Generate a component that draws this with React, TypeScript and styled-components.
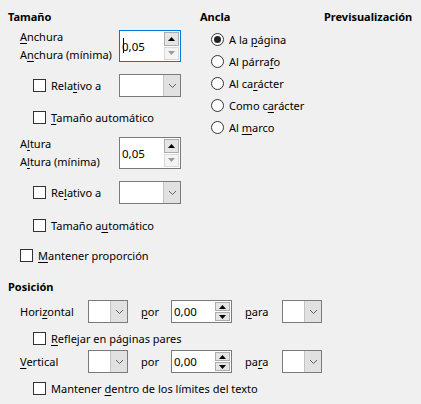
import React from "react";
import styled, { createGlobalStyle, css } from "styled-components";

const GlobalStyle = createGlobalStyle`
  html, body { margin: 0; padding: 0; background: #f0f0f0; }
  body {
    font-family: "Noto Sans", "Liberation Sans", sans-serif;
    font-size: 11px;
    color: #000;
  }
`;

const Page = styled.div`
  width: 421px;
  height: 404px;
  box-sizing: border-box;
  padding: 9px 0 0 8px;
  display: flex;
  flex-direction: column;
`;

const Top = styled.div`
  display: flex;
`;

const Column = styled.div<{ $w?: number }>`
  display: flex;
  flex-direction: column;
  ${(p) => (p.$w ? css`width: ${p.$w}px;` : "")}
  flex-shrink: 0;
`;

const Title = styled.div<{ $mt?: number }>`
  font-weight: 700;
  line-height: 16px;
  height: 16px;
  white-space: nowrap;
  margin-top: ${(p) => p.$mt ?? 0}px;
`;

const Row = styled.div<{ $mt: number; $pl: number; $h: number }>`
  display: flex;
  align-items: center;
  margin-top: ${(p) => p.$mt}px;
  padding-left: ${(p) => p.$pl}px;
  height: ${(p) => p.$h}px;
  white-space: nowrap;
`;

const LabelCell = styled.div<{ $w: number }>`
  width: ${(p) => p.$w}px;
  flex-shrink: 0;
  display: flex;
  align-items: center;
`;

const TwoLines = styled.div`
  display: flex;
  flex-direction: column;
  line-height: 18px;
`;

const U = styled.span`
  text-decoration: underline;
  text-underline-offset: 2px;
  text-decoration-thickness: 1px;
`;

const Check = styled.span`
  width: 13px;
  height: 13px;
  box-sizing: border-box;
  border: 1px solid #333;
  background: #fff;
  flex-shrink: 0;
  margin-right: 5px;
`;

const Radio = styled.span<{ $on?: boolean }>`
  width: 13px;
  height: 13px;
  box-sizing: border-box;
  border: 1px solid #333;
  border-radius: 50%;
  background: #fff;
  flex-shrink: 0;
  margin-right: 5px;
  display: flex;
  align-items: center;
  justify-content: center;
  &::after {
    content: "";
    display: ${(p) => (p.$on ? "block" : "none")};
    width: 7px;
    height: 7px;
    border-radius: 50%;
    background: #222;
  }
`;

const RadioList = styled.div`
  display: flex;
  flex-direction: column;
  margin-top: 3px;
  padding-left: 11px;
`;

const RadioRow = styled.div`
  display: flex;
  align-items: center;
  height: 22px;
  white-space: nowrap;
`;

const Combo = styled.div<{ $w: number }>`
  width: ${(p) => p.$w}px;
  height: 23px;
  box-sizing: border-box;
  border: 1px solid #7a7a7a;
  background: #fff;
  display: flex;
  justify-content: flex-end;
  flex-shrink: 0;
`;

const ComboButton = styled.div`
  width: 17px;
  height: 100%;
  box-sizing: border-box;
  background: #e1e1e1;
  border-left: 1px solid #c4c4c4;
  display: flex;
  align-items: center;
  justify-content: center;
`;

const Spin = styled.div<{ $w: number; $h: number; $focus?: boolean }>`
  width: ${(p) => p.$w}px;
  height: ${(p) => p.$h}px;
  box-sizing: border-box;
  border: 1px solid ${(p) => (p.$focus ? "#0078d7" : "#7a7a7a")};
  background: #fff;
  display: flex;
  align-items: stretch;
  flex-shrink: 0;
  position: relative;
`;

const SpinText = styled.div`
  flex: 1;
  display: flex;
  align-items: center;
  padding-left: 2px;
  font-size: 11.5px;
  position: relative;
`;

const Caret = styled.span`
  position: absolute;
  left: 3px;
  top: 50%;
  width: 1px;
  height: 15px;
  margin-top: -8px;
  background: #000;
`;

const SpinButtons = styled.div`
  width: 15px;
  display: flex;
  flex-direction: column;
  gap: 1px;
  padding: 1px 1px 1px 0;
`;

const SpinBtn = styled.div<{ $disabled?: boolean }>`
  flex: 1;
  box-sizing: border-box;
  border: 1px solid ${(p) => (p.$disabled ? "#d9d9d9" : "#adadad")};
  background: ${(p) => (p.$disabled ? "#f4f4f4" : "#e5e5e5")};
  display: flex;
  align-items: center;
  justify-content: center;
`;

const Word = styled.span<{ $w: number; $ml?: number }>`
  width: ${(p) => p.$w}px;
  margin-left: ${(p) => p.$ml ?? 0}px;
  flex-shrink: 0;
`;

const Chevron = () => (
  <svg width="9" height="6" viewBox="0 0 9 6">
    <path d="M1 1 L4.5 4.5 L8 1" fill="none" stroke="#606060" strokeWidth="1" />
  </svg>
);

const Arrow = ({ up, color }: { up?: boolean; color: string }) => (
  <svg width="7" height="4" viewBox="0 0 7 4">
    {up ? (
      <path d="M0 4 L3.5 0 L7 4 Z" fill={color} />
    ) : (
      <path d="M0 0 L3.5 4 L7 0 Z" fill={color} />
    )}
  </svg>
);

const ComboBox = ({ w }: { w: number }) => (
  <Combo $w={w}>
    <ComboButton>
      <Chevron />
    </ComboButton>
  </Combo>
);

const SpinBox = ({
  w,
  h,
  value,
  focus,
  downDisabled,
}: {
  w: number;
  h: number;
  value: string;
  focus?: boolean;
  downDisabled?: boolean;
}) => (
  <Spin $w={w} $h={h} $focus={focus}>
    <SpinText>
      {value}
      {focus && <Caret />}
    </SpinText>
    <SpinButtons>
      <SpinBtn>
        <Arrow up color="#000" />
      </SpinBtn>
      <SpinBtn $disabled={downDisabled}>
        <Arrow color={downDisabled ? "#9a9a9a" : "#000"} />
      </SpinBtn>
    </SpinButtons>
  </Spin>
);

export default function App() {
  return (
    <>
      <GlobalStyle />
      <Page>
        <Top>
          <Column $w={192}>
            <Title>Tamaño</Title>
            <Row $mt={5} $pl={12} $h={32}>
              <LabelCell $w={99}>
                <TwoLines>
                  <span>
                    <U>A</U>nchura
                  </span>
                  <span>
                    A<U>n</U>chura (mínima)
                  </span>
                </TwoLines>
              </LabelCell>
              <SpinBox w={62} h={32} value="0,05" focus downDisabled />
            </Row>
            <Row $mt={12} $pl={25} $h={23}>
              <LabelCell $w={86}>
                <Check />
                <span>
                  Rela<U>t</U>ivo a
                </span>
              </LabelCell>
              <ComboBox w={62} />
            </Row>
            <Row $mt={10} $pl={25} $h={20}>
              <Check />
              <span>
                <U>T</U>amaño automático
              </span>
            </Row>
            <Row $mt={10} $pl={12} $h={32}>
              <LabelCell $w={99}>
                <TwoLines>
                  <span>
                    A<U>l</U>tura
                  </span>
                  <span>
                    A<U>l</U>tura (mínima)
                  </span>
                </TwoLines>
              </LabelCell>
              <SpinBox w={62} h={32} value="0,05" downDisabled />
            </Row>
            <Row $mt={12} $pl={25} $h={23}>
              <LabelCell $w={86}>
                <Check />
                <span>
                  Re<U>l</U>ativo a
                </span>
              </LabelCell>
              <ComboBox w={62} />
            </Row>
            <Row $mt={11} $pl={25} $h={20}>
              <Check />
              <span>
                Tamaño a<U>u</U>tomático
              </span>
            </Row>
            <Row $mt={10} $pl={12} $h={20}>
              <Check />
              <span>
                <U>M</U>antener proporción
              </span>
            </Row>
          </Column>
          <Column $w={124}>
            <Title>Ancla</Title>
            <RadioList>
              <RadioRow>
                <Radio $on />
                <span>
                  A la <U>p</U>ágina
                </span>
              </RadioRow>
              <RadioRow>
                <Radio />
                <span>
                  Al párra<U>f</U>o
                </span>
              </RadioRow>
              <RadioRow>
                <Radio />
                <span>
                  Al ca<U>r</U>ácter
                </span>
              </RadioRow>
              <RadioRow>
                <Radio />
                <span>
                  Como c<U>a</U>rácter
                </span>
              </RadioRow>
              <RadioRow>
                <Radio />
                <span>
                  Al <U>m</U>arco
                </span>
              </RadioRow>
            </RadioList>
          </Column>
          <Column>
            <Title>Previsualización</Title>
          </Column>
        </Top>
        <Title $mt={14}>Posición</Title>
        <Row $mt={5} $pl={12} $h={23}>
          <Word $w={68}>
            Hori<U>z</U>ontal
          </Word>
          <ComboBox w={40} />
          <Word $w={30} $ml={13}>
            <U>p</U>or
          </Word>
          <SpinBox w={61} h={23} value="0,00" />
          <Word $w={37} $ml={13}>
            <U>p</U>ara
          </Word>
          <ComboBox w={40} />
        </Row>
        <Row $mt={5} $pl={25} $h={20}>
          <Check />
          <span>
            <U>R</U>eflejar en páginas pares
          </span>
        </Row>
        <Row $mt={2} $pl={12} $h={23}>
          <Word $w={68}>
            <U>V</U>ertical
          </Word>
          <ComboBox w={40} />
          <Word $w={30} $ml={13}>
            por
          </Word>
          <SpinBox w={61} h={23} value="0,00" />
          <Word $w={37} $ml={13}>
            pa<U>r</U>a
          </Word>
          <ComboBox w={40} />
        </Row>
        <Row $mt={5} $pl={25} $h={20}>
          <Check />
          <span>
            Mantener <U>d</U>entro de los límites del texto
          </span>
        </Row>
      </Page>
    </>
  );
}
